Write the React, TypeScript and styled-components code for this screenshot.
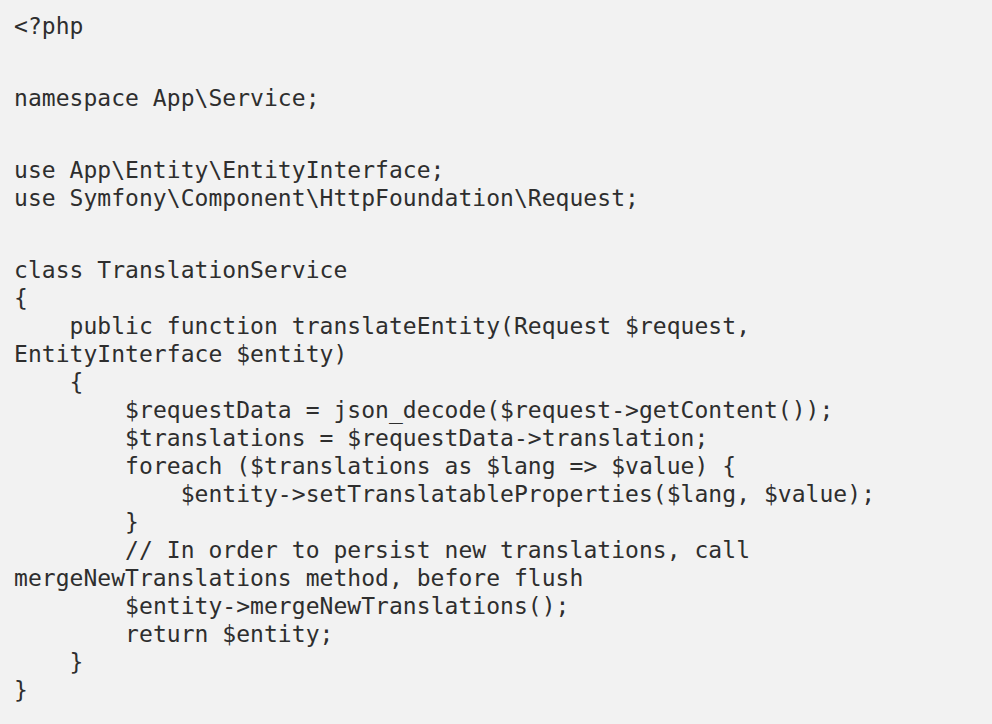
import React from "react";
import styled, { createGlobalStyle } from "styled-components";

const Global = createGlobalStyle`
  html, body { margin: 0; padding: 0; background: #f2f2f2; }
`;

const CodeBlock = styled.pre`
  margin: 0;
  box-sizing: border-box;
  width: 992px;
  min-height: 724px;
  padding: 12px 60px 14px 14px;
  background: #f2f2f2;
  color: #2e2e2e;
  font-family: "DejaVu Sans Mono", monospace;
  font-size: 23px;
  letter-spacing: 0.04px;
  line-height: 28px;
  white-space: pre-wrap;
  word-break: normal;
`;

const Line = styled.div`
  min-height: 28px;
`;

const Gap = styled.div`
  height: 44px;
`;

type Item = string | null;

const lines: Item[] = [
  "<?php",
  null,
  "namespace App\\Service;",
  null,
  "use App\\Entity\\EntityInterface;",
  "use Symfony\\Component\\HttpFoundation\\Request;",
  null,
  "class TranslationService",
  "{",
  "    public function translateEntity(Request $request, EntityInterface $entity)",
  "    {",
  "        $requestData = json_decode($request->getContent());",
  "        $translations = $requestData->translation;",
  "        foreach ($translations as $lang => $value) {",
  "            $entity->setTranslatableProperties($lang, $value);",
  "        }",
  "        // In order to persist new translations, call mergeNewTranslations method, before flush",
  "        $entity->mergeNewTranslations();",
  "        return $entity;",
  "    }",
  "}",
];

export default function App() {
  return (
    <>
      <Global />
      <CodeBlock>
        {lines.map((l, i) => (l === null ? <Gap key={i} /> : <Line key={i}>{l}</Line>))}
      </CodeBlock>
    </>
  );
}
